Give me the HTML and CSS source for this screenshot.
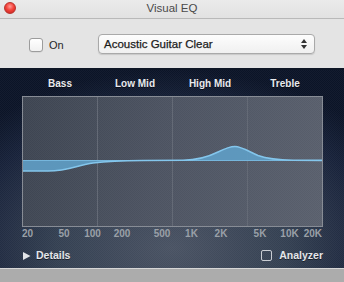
FILE: index.html
```html
<!DOCTYPE html>
<html>
<head>
<meta charset="utf-8">
<link rel="stylesheet" href="styles.css">
</head>
<body>
<div class="window">
  <div class="titlebar">
    <span class="close"></span>
    <span class="title">Visual EQ</span>
  </div>
  <div class="toolbar">
    <label class="check">
      <span class="box"></span>
      <span class="check-label">On</span>
    </label>
    <div class="select">
      <span class="select-text">Acoustic Guitar Clear</span>
      <svg class="arrows" width="6" height="10" viewBox="0 0 6 10">
        <polygon points="3,0 6,4 0,4" fill="#333"/>
        <polygon points="0,6 6,6 3,10" fill="#333"/>
      </svg>
    </div>
  </div>
  <div class="panel">
    <div class="bands">
      <span>Bass</span>
      <span>Low Mid</span>
      <span>High Mid</span>
      <span>Treble</span>
    </div>
    <div class="graph">
      <svg class="curve" width="299" height="129" viewBox="0 0 299 129">
        <line x1="74.5" y1="0" x2="74.5" y2="129" class="grid"/>
        <line x1="149.5" y1="0" x2="149.5" y2="129" class="grid"/>
        <line x1="224.5" y1="0" x2="224.5" y2="129" class="grid"/>
        <path class="fill" d="M0,74 L25,74 C45,74 55,68 70,66 C85,64.2 100,63.7 120,63.5 L160,63.3 C175,63 185,60 195,55 C203,51 207,49.5 212,49.5 C218,49.5 225,54 235,58.5 C245,62 255,63 270,63.3 L299,63.4 L299,63.5 L0,63.5 Z"/>
        <line x1="0" y1="63.5" x2="299" y2="63.5" class="zero"/>
        <path class="stroke" d="M0,74 L25,74 C45,74 55,68 70,66 C85,64.2 100,63.7 120,63.5 L160,63.3 C175,63 185,60 195,55 C203,51 207,49.5 212,49.5 C218,49.5 225,54 235,58.5 C245,62 255,63 270,63.3 L299,63.4"/>
      </svg>
    </div>
    <div class="freqs">
      <span class="freq first">20</span>
      <span class="freq" style="left:42px">50</span>
      <span class="freq" style="left:70.5px">100</span>
      <span class="freq" style="left:100px">200</span>
      <span class="freq" style="left:140px">500</span>
      <span class="freq" style="left:169.5px">1K</span>
      <span class="freq" style="left:199px">2K</span>
      <span class="freq" style="left:238px">5K</span>
      <span class="freq" style="left:267.5px">10K</span>
      <span class="freq last">20K</span>
    </div>
    <div class="footer">
      <div class="details">
        <svg width="8" height="8" viewBox="0 0 8 8"><polygon points="0,0 7.5,4 0,8" fill="#e2e4e8"/></svg>
        <span>Details</span>
      </div>
      <label class="analyzer">
        <span class="abox"></span>
        <span>Analyzer</span>
      </label>
    </div>
  </div>
  <div class="bottombar"></div>
</div>
</body>
</html>
```

FILE: styles.css
```css
* { box-sizing: border-box; }
html, body { margin: 0; padding: 0; }
body {
  width: 344px;
  height: 282px;
  overflow: hidden;
  font-family: "Liberation Sans", Arial, sans-serif;
  background: #e6e6e6;
}
.window {
  width: 344px;
  height: 282px;
  display: flex;
  flex-direction: column;
}
.titlebar {
  height: 19px;
  display: grid;
  grid-template-columns: 1fr auto 1fr;
  align-items: center;
  background: linear-gradient(#ebebeb, #e2e2e2);
  border-bottom: 1px solid #b9b9b9;
}
.close {
  grid-column: 1;
  grid-row: 1;
  justify-self: start;
  margin-left: 4px;
  width: 12px;
  height: 12px;
  border-radius: 50%;
  background: radial-gradient(circle at 50% 35%, #ff9a94 0%, #f4443c 45%, #c0201a 100%);
  border: 1px solid #b8322d;
  margin-top: -2px;
}
.title {
  grid-column: 2;
  grid-row: 1;
  font-size: 11.5px;
  color: #4a4a4a;
  margin-top: -2px;
}
.toolbar {
  height: 49px;
  display: grid;
  grid-template-columns: 69px 217px;
  align-items: center;
  padding-left: 29px;
  padding-top: 1px;
  background: #e4e4e4;
}
.check {
  display: flex;
  align-items: center;
  margin-top: 1px;
}
.box {
  width: 14px;
  height: 14px;
  border: 1px solid #9c9c9c;
  border-radius: 3px;
  background: linear-gradient(#ffffff, #f1f1f1);
  box-shadow: 0 0.5px 0 rgba(0,0,0,0.1);
}
.check-label {
  margin-left: 6px;
  font-size: 11px;
  color: #262626;
}
.select {
  height: 20px;
  display: flex;
  align-items: center;
  justify-content: space-between;
  padding: 0 7px 0 5px;
  border: 1px solid #a9a9a9;
  border-radius: 4px;
  background: linear-gradient(#fdfdfd, #f0f0f0);
  box-shadow: 0 1px 1px rgba(0,0,0,0.12);
}
.select-text {
  font-size: 11.5px;
  color: #1c1c1c;
  -webkit-text-stroke: 0.25px #1c1c1c;
}
.arrows { display: block; }
.panel {
  height: 200px;
  border-top: 2px solid #0e1626;
  padding: 8px 21px 0 22px;
  background-color: #26303f;
  background-image:
    conic-gradient(rgba(255,255,255,0.035) 25%, transparent 0 50%, rgba(255,255,255,0.035) 0 75%, transparent 0),
    radial-gradient(ellipse 75% 90% at 50% 90%, #4a5363 0%, #344052 45%, #18223a 80%, #0b1427 100%);
  background-size: 2px 2px, 100% 100%;
  display: flex;
  flex-direction: column;
}
.bands {
  display: grid;
  grid-template-columns: repeat(4, 75px);
  width: 301px;
  height: 12px;
  margin-bottom: 6px;
  font-size: 10px;
  font-weight: bold;
  line-height: 12px;
  color: #e8eaee;
  text-shadow: 0 1px 0 rgba(0,0,0,0.55);
}
.bands span { text-align: center; padding-left: 1px; }
.graph {
  width: 301px;
  height: 131px;
  border: 1px solid #878c95;
  background-color: #4a515e;
  background-image:
    conic-gradient(rgba(255,255,255,0.03) 25%, transparent 0 50%, rgba(255,255,255,0.03) 0 75%, transparent 0),
    linear-gradient(100deg, #3d4451 0%, #4c5361 45%, #5a606d 100%);
  background-size: 2px 2px, 100% 100%;
}
.curve { display: block; }
.grid { stroke: #646a76; stroke-width: 1; }
.fill { fill: #5f9fc6; opacity: 0.9; }
.zero { stroke: #76b6dc; stroke-width: 1; }
.stroke { fill: none; stroke: #84c6ec; stroke-width: 1.6; }
.freqs {
  position: relative;
  width: 301px;
  height: 12px;
  margin-top: 1px;
  font-size: 10px;
  font-weight: bold;
  line-height: 12px;
  color: #9aa0a8;
}
.freq {
  position: absolute;
  top: 0;
  transform: translateX(-50%);
  white-space: nowrap;
}
.freq.first { left: 0; transform: none; }
.freq.last { right: 1px; transform: none; }
.footer {
  margin-top: 9px;
  height: 12px;
  width: 301px;
  display: flex;
  justify-content: space-between;
  align-items: center;
  font-size: 10.5px;
  font-weight: bold;
  line-height: 12px;
  color: #e4e6ea;
  text-shadow: 0 1px 0 rgba(0,0,0,0.5);
}
.details {
  display: flex;
  align-items: center;
  gap: 5px;
  padding-left: 1px;
}
.details svg { display: block; margin-top: 1px; }
.analyzer {
  display: flex;
  align-items: center;
  gap: 7px;
}
.abox {
  width: 11px;
  height: 11px;
  border: 1px solid #c9cdd3;
  border-radius: 2px;
  margin-top: 1px;
}
.bottombar {
  height: 14px;
  background: #acacac;
  border-top: 1px solid #d6d6d6;
}
```
